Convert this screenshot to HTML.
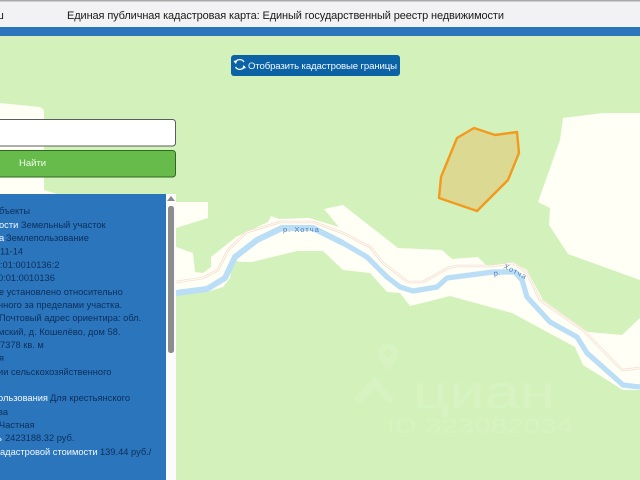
<!DOCTYPE html>
<html lang="ru">
<head>
<meta charset="utf-8">
<title>Единая публичная кадастровая карта</title>
<style>
html,body{margin:0;padding:0;width:640px;height:480px;overflow:hidden;background:#d3f2bb}
svg{position:absolute;left:0;top:0;display:block}
text{font-family:"Liberation Sans",sans-serif}
.d{fill:#0d2f5c;font-size:9.3px}
.w{fill:#f4f9ff;font-size:9.3px}
</style>
</head>
<body>
<svg width="640" height="480" viewBox="0 0 640 480" xmlns="http://www.w3.org/2000/svg">
<defs><filter id="b" x="0" y="0" width="100%" height="100%"><feGaussianBlur stdDeviation="0.35"/></filter></defs>
<rect width="640" height="480" fill="#d3f2bb"/>
<g filter="url(#b)">
<polygon fill="#fffff6" points="0,103 40,107 44,110 44,190 57,194 0,200"/>
<polygon fill="#fffff6" points="176,202 208,202 208,218 176,228"/>
<polygon fill="#fffff6" points="563,118 603,113 640,113 640,280 568,254 549,225 550,208 538,202 560,140"/>
<polygon fill="#fffff6" points="176,247 193,253 195,272 203,273 211,267 211,257 236,237 268,222 271,216 279,219 309,218 339,227 324,209 343,205 398,248 442,250 452,259 478,257 487,266 512,262 527,270 543,300 588,332 622,335 640,318 640,390 623,390 583,365 575,347 525,320 512,313 450,296 410,306 400,293 387,292 370,273 343,270 323,251 297,251 252,262 240,262 233,260 230,278 223,287 207,292 176,295"/>
<polyline fill="none" stroke="#f6dfd3" stroke-width="2.6" stroke-linejoin="round" points="176,282 203,278 218,270 228,250 247,232 280,222 313,222 343,233 370,247 383,263 408,282 423,282 448,268 457,266 493,266 513,263 527,273 540,300 583,330 622,370 640,368"/>
<polyline fill="none" stroke="#fffff6" stroke-width="0.9" stroke-linejoin="round" points="176,282 203,278 218,270 228,250 247,232 280,222 313,222 343,233 370,247 383,263 408,282 423,282 448,268 457,266 493,266 513,263 527,273 540,300 583,330 622,370 640,368"/>
<polyline fill="none" stroke="#b9def6" stroke-width="6" stroke-linejoin="round" points="176,293 207,289 225,278 235,257 257,240 282,228 313,228 343,243"/>
<polyline fill="none" stroke="#b9def6" stroke-width="5.2" stroke-linejoin="round" points="343,243 367,257 387,277 400,287 413,291 437,287 447,278 493,272 515,272 522,280 527,297 550,322 577,337 587,353 623,385 640,387"/>
<polygon fill="#dcd993" stroke="#f39a1f" stroke-width="2.4" stroke-linejoin="round" points="474,128 495,135 517,132 519,153 508,180 477,211 439,198 441,177 457,138"/>
<text x="283" y="232" font-size="7.5" fill="#4f82b8" letter-spacing="1">р. Хотча</text>
<text transform="translate(494,276) rotate(-8)" font-size="7.5" fill="#4f82b8">р.</text>
<text transform="translate(503,268) rotate(27)" font-size="7.5" fill="#4f82b8" letter-spacing="1">Хотча</text>
<g opacity="0.09" fill="#ffffff">
<path fill-rule="evenodd" d="M388,344c6,0 10,4 10,9c0,6 -6,13 -10,17c-4,-4 -10,-11 -10,-17c0,-5 4,-9 10,-9zm0,5a4,4 0 1,0 .01,0z"/>
<path d="M354,399l21,-22l19,22l-5,5l-14,-15l-15,15z"/>
<text x="413" y="408" font-size="47" textLength="142" lengthAdjust="spacingAndGlyphs">циан</text>
<text x="387" y="433" font-size="21" textLength="186" lengthAdjust="spacingAndGlyphs">ID 323082034</text>
</g>
</g>

<!-- header -->
<rect width="640" height="27" fill="#f2f2f4"/>
<rect width="640" height="1.5" fill="#a9a9a9"/>
<rect y="27" width="640" height="9" fill="#2a75bb"/>
<text x="-5" y="19" font-size="11" fill="#1a1a1a">ш</text>
<text x="67" y="19" font-size="11" fill="#1a1a1a" textLength="437" lengthAdjust="spacing">Единая публичная кадастровая карта: Единый государственный реестр недвижимости</text>

<!-- button -->
<rect x="231" y="55" width="169" height="21" rx="3" fill="#0b63a5"/>
<g fill="none" stroke="#f2f8ff" stroke-width="1.3">
<path d="M235,63a5,5 0 0 1 9,-1"/>
<path d="M244.500,66a5,5 0 0 1 -9,1"/>
</g>
<path d="M233.500,61l4,-1l-1.500,4z M246,68l-4,1l1.500,-4z" fill="#f2f8ff"/>
<text x="248" y="69" font-size="9.600" fill="#f4f9ff" textLength="149" lengthAdjust="spacing">Отобразить кадастровые границы</text>

<!-- search -->
<rect x="-4" y="119.500" width="179.500" height="26.500" rx="3" fill="#ffffff" stroke="#5c5c5c"/>
<rect x="-4" y="150.500" width="179.500" height="26.500" rx="3" fill="#66bb4a" stroke="#2d6a20"/>
<text x="19" y="166" font-size="9.500" fill="#f2fbe9">Найти</text>

<!-- panel -->
<rect x="0" y="194" width="166" height="286" fill="#2a75bb"/>
<rect x="166" y="194" width="10" height="286" fill="#fbfbfb"/>
<path d="M171,196l4,5h-8z" fill="#8a8a8a"/>
<rect x="168" y="206" width="6" height="147" rx="2.500" fill="#8d8d8d"/>

<text class="d" x="-1" y="214">бъекты</text>
<text class="w" x="-1" y="228">ости</text><text class="d" x="21" y="228">Земельный участок</text>
<text class="w" x="-1" y="241">а</text><text class="d" x="6" y="241">Землепользование</text>
<text class="d" x="0" y="254.500">11-14</text>
<text class="d" x="0" y="268">:01:0010136:2</text>
<text class="d" x="-2" y="281">0:01:0010136</text>
<text class="d" x="-1" y="295">е установлено относительно</text>
<text class="d" x="-2" y="308">нного за пределами участка.</text>
<text class="d" x="-1" y="321">Почтовый адрес ориентира: обл.</text>
<text class="d" x="-2" y="335">мский, д. Кошелёво, дом 58.</text>
<text class="d" x="0" y="348">7378 кв. м</text>
<text class="d" x="-1" y="361">я</text>
<text class="d" x="-2" y="375">ии сельскохозяйственного</text>
<text class="w" x="-2" y="401">ользования</text><text class="d" x="50" y="401">Для крестьянского</text>
<text class="d" x="-2" y="415">ва</text>
<text class="d" x="-1" y="428">Частная</text>
<text class="w" x="-3" y="441">ь</text><text class="d" x="5" y="441">2423188.32 руб.</text>
<text class="w" x="0" y="455">адастровой стоимости</text><text class="d" x="100" y="455">139.44 руб./</text>
</svg>
</body>
</html>
